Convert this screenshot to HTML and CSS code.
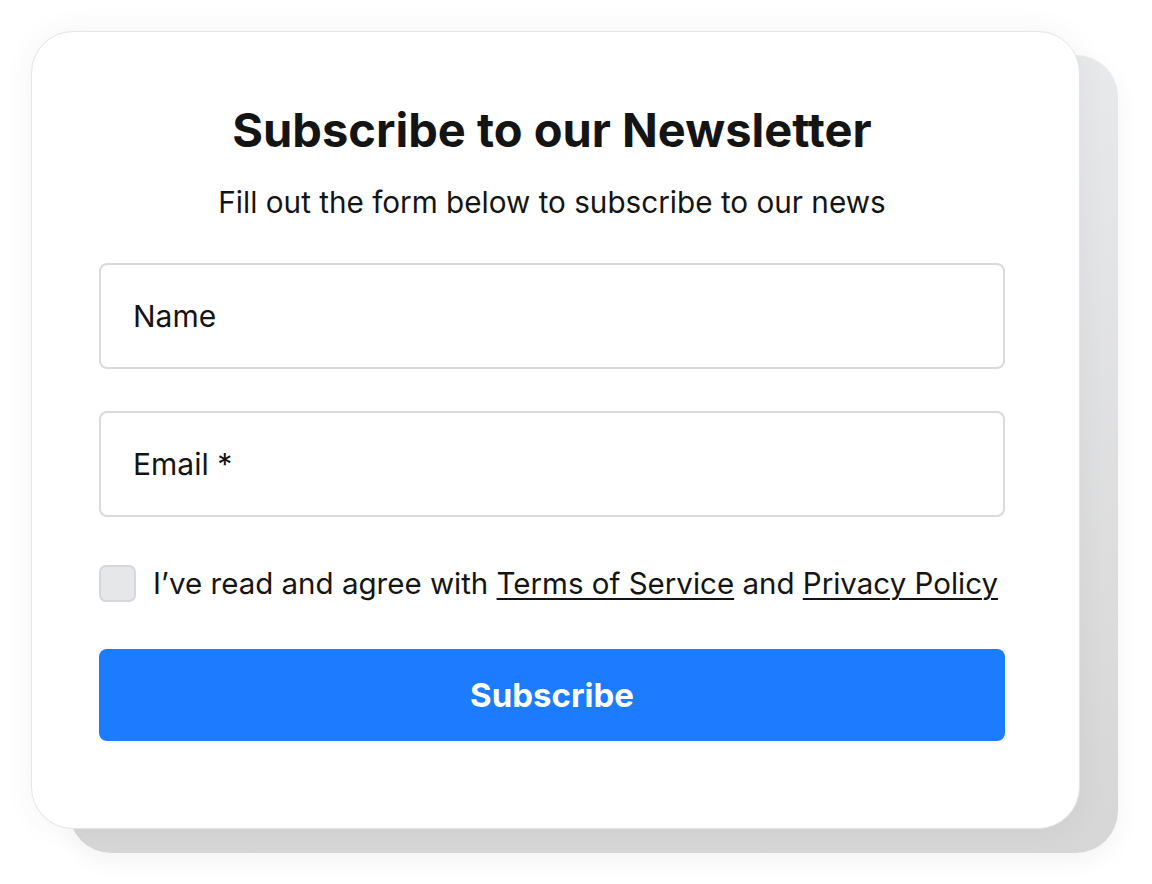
FILE: index.html
```html
<!DOCTYPE html>
<html lang="en">
<head>
  <meta charset="UTF-8">
  <meta name="viewport" content="width=device-width, initial-scale=1.0">
  <title>Subscribe to our Newsletter</title>
  <link rel="stylesheet" href="styles.css">
</head>
<body>
  <!-- Kart -->
  <div class="stage">
    <div class="card-stack">
      <form class="card">
        <h1 class="title">Subscribe to our Newsletter</h1>
        <p class="subtitle">Fill out the form below to subscribe to our news</p>

        <input class="field" type="text" placeholder="Name">
        <input class="field" type="email" placeholder="Email *">

        <label class="agree">
          <input type="checkbox">
          <span class="box"></span>
          <span>I’ve read and agree with <a href="#">Terms of Service</a> and <a href="#">Privacy Policy</a></span>
        </label>

        <button class="submit" type="button">Subscribe</button>
      </form>
    </div>
  </div>
</body>
</html>
```

FILE: styles.css
```css
/* Ümumi stil */
body {
  margin: 0;
  padding: 0;
  background-color: #ffffff;
  font-family: Inter, "Noto Sans", sans-serif;
  color: #141414;
}

.stage {
  padding: 31px 0 31px 31px;
}

/* Arxadakı boz təbəqə */
.card-stack {
  position: relative;
  width: 1049px;
  margin-bottom: 24px;
}

.card-stack::before {
  content: "";
  position: absolute;
  top: 24px;
  left: 38px;
  width: 100%;
  height: 100%;
  border-radius: 42px;
  background: linear-gradient(180deg, #e8e9eb 0%, #d6d6d6 100%);
  box-shadow: 0 8px 24px rgba(0, 0, 0, 0.05);
}

.card {
  position: relative;
  box-sizing: border-box;
  height: 798px;
  padding: 70px 74px 0 67px;
  background-color: #ffffff;
  border: 1px solid #e3e5e8;
  border-radius: 42px;
  box-shadow: 0 0 30px rgba(60, 70, 90, 0.06);
  display: flex;
  flex-direction: column;
}

.title {
  margin: 0;
  font-size: 47px;
  line-height: 56px;
  font-weight: 700;
  text-align: center;
}

.subtitle {
  margin: 26px 0 0;
  font-size: 29.7px;
  line-height: 36px;
  text-align: center;
}

/* Sahələr */
.field {
  box-sizing: border-box;
  height: 106px;
  margin-top: 43px;
  padding: 0 32px;
  border: 2px solid #dadada;
  border-radius: 8px;
  font-family: inherit;
  font-size: 30px;
  color: #141414;
  outline: none;
}

.field + .field {
  margin-top: 42px;
}

.field::placeholder {
  color: #141414;
}

/* Razılıq */
.agree {
  display: flex;
  align-items: center;
  gap: 17px;
  margin-top: 48px;
  font-size: 29.5px;
  line-height: 37px;
}

.agree input {
  display: none;
}

.agree .box {
  box-sizing: border-box;
  width: 37px;
  height: 37px;
  flex-shrink: 0;
  background-color: #e6e7e9;
  border: 2px solid #d6d7da;
  border-radius: 7px;
}

.agree a {
  color: #141414;
  text-decoration: underline;
  text-underline-offset: 4px;
  text-decoration-thickness: 2px;
}

.submit {
  height: 92px;
  margin-top: 47px;
  border: none;
  border-radius: 8px;
  background-color: #1c7bff;
  color: #ffffff;
  font-family: inherit;
  font-size: 33px;
  font-weight: 700;
  cursor: pointer;
}
```
